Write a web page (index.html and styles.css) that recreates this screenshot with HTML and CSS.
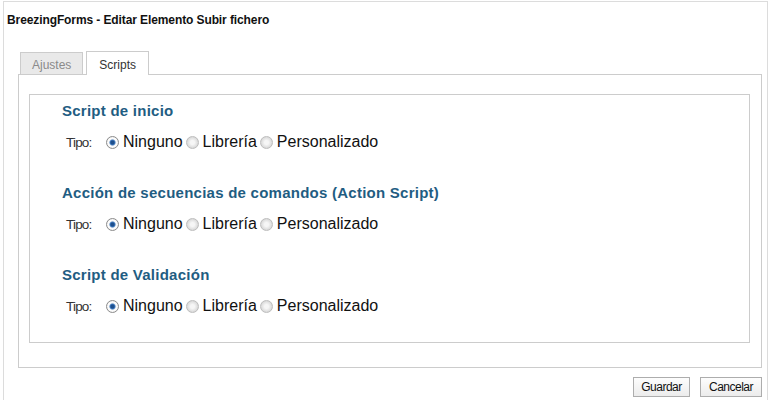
FILE: index.html
```html
<!DOCTYPE html>
<html lang="es">
<head>
  <meta charset="UTF-8" />
  <meta name="viewport" content="width=device-width, initial-scale=1.0" />
  <title>BreezingForms - Editar Elemento Subir fichero</title>
  <link rel="stylesheet" href="styles.css">
</head>
<body>
  <div class="dialog">
    <h1 class="dialog-title">BreezingForms - Editar Elemento Subir fichero</h1>

    <div class="tabs">
      <div class="tab">Ajustes</div>
      <div class="tab active">Scripts</div>
    </div>

    <div class="tab-panel">
      <div class="script-box">
        <div class="script-section">
          <h2>Script de inicio</h2>
          <div class="type-row">
            <span class="type-label">Tipo:</span>
            <input type="radio" name="init" id="init-none" checked /><label for="init-none">Ninguno</label>
            <input type="radio" name="init" id="init-lib" /><label for="init-lib">Librería</label>
            <input type="radio" name="init" id="init-custom" /><label for="init-custom">Personalizado</label>
          </div>
        </div>

        <div class="script-section">
          <h2>Acción de secuencias de comandos (Action Script)</h2>
          <div class="type-row">
            <span class="type-label">Tipo:</span>
            <input type="radio" name="action" id="action-none" checked /><label for="action-none">Ninguno</label>
            <input type="radio" name="action" id="action-lib" /><label for="action-lib">Librería</label>
            <input type="radio" name="action" id="action-custom" /><label for="action-custom">Personalizado</label>
          </div>
        </div>

        <div class="script-section">
          <h2>Script de Validación</h2>
          <div class="type-row">
            <span class="type-label">Tipo:</span>
            <input type="radio" name="valid" id="valid-none" checked /><label for="valid-none">Ninguno</label>
            <input type="radio" name="valid" id="valid-lib" /><label for="valid-lib">Librería</label>
            <input type="radio" name="valid" id="valid-custom" /><label for="valid-custom">Personalizado</label>
          </div>
        </div>
      </div>
    </div>

    <div class="actions">
      <button type="button" class="btn btn-save">Guardar</button>
      <button type="button" class="btn btn-cancel">Cancelar</button>
    </div>
  </div>
</body>
</html>
```

FILE: styles.css
```css
body {
  font-family: "Liberation Sans", Arial, sans-serif;
  background-color: #fff;
  margin: 0;
  padding: 0;
  color: #333;
}

.dialog {
  margin: 1px 0 0 3px;
  width: 765px;
  height: 399px;
  border: 1px solid #dcdcdc;
  border-bottom: none;
  box-sizing: border-box;
}

.dialog-title {
  margin: 0;
  padding: 10px 3px 0;
  font-size: 12px;
  line-height: 16px;
  font-weight: bold;
  letter-spacing: -0.1px;
  color: #111;
}

.tabs {
  display: flex;
  align-items: flex-end;
  gap: 3px;
  margin: 23px 0 -1px 16px;
  position: relative;
}

.tab {
  border: 1px solid #ccc;
  border-bottom: none;
  font-size: 12px;
  line-height: 20px;
  height: 22px;
  padding: 2px 11px 0;
  box-sizing: border-box;
  background-color: #e9e9e9;
  color: #8a8a8a;
  margin-bottom: 1px;
}

.tab.active {
  background-color: #fff;
  color: #333;
  height: 24px;
  padding: 3px 12px 0;
  margin-bottom: 0;
}

.tab-panel {
  margin-left: 14px;
  width: 744px;
  border: 1px solid #ccc;
  box-sizing: border-box;
  padding: 19px 11px 24px 10px;
}

.script-box {
  border: 1px solid #ccc;
  padding: 7px 32px 10px;
  height: 249px;
  box-sizing: border-box;
}

.script-section + .script-section {
  margin-top: 32px;
}

.script-section h2 {
  margin: 0;
  font-size: 15px;
  line-height: 18px;
  font-weight: bold;
  letter-spacing: 0.25px;
  color: #1f5d82;
}

.type-row {
  display: flex;
  align-items: center;
  margin-top: 12px;
  padding-left: 4px;
  height: 20px;
  font-size: 16px;
  color: #111;
}

.type-label {
  width: 37px;
  font-size: 13.5px;
  letter-spacing: -0.8px;
  color: #333;
}

.type-row input[type="radio"] {
  appearance: none;
  -webkit-appearance: none;
  width: 13px;
  height: 13px;
  margin: 0 4px 0 3px;
  border-radius: 50%;
  border: 1px solid #bdbdbd;
  background: radial-gradient(circle, #f6f6f6 0 2px, #d9d9d9 5.5px);
  box-sizing: border-box;
}

.type-row input[type="radio"]:checked {
  border-color: #8c8c8c;
  background: radial-gradient(circle, #1e4f8c 0 1.5px, #3f7ac0 2.5px, #f4f4f4 3.5px, #fff 4.5px, #e6e6e6 6px);
}

.type-row label {
  line-height: 20px;
}

.type-row label + input[type="radio"] {
  margin-left: 3px;
}

.actions {
  display: flex;
  justify-content: flex-end;
  gap: 10px;
  margin: 9px 5px 0 0;
}

.btn {
  font-family: "Liberation Sans", Arial, sans-serif;
  font-size: 12px;
  letter-spacing: -0.5px;
  height: 20px;
  padding: 0;
  border: 1px solid #adadad;
  background: linear-gradient(#fdfdfd, #ececec);
  color: #111;
  cursor: pointer;
}

.btn-save {
  width: 57px;
}

.btn-cancel {
  width: 62px;
}
```
